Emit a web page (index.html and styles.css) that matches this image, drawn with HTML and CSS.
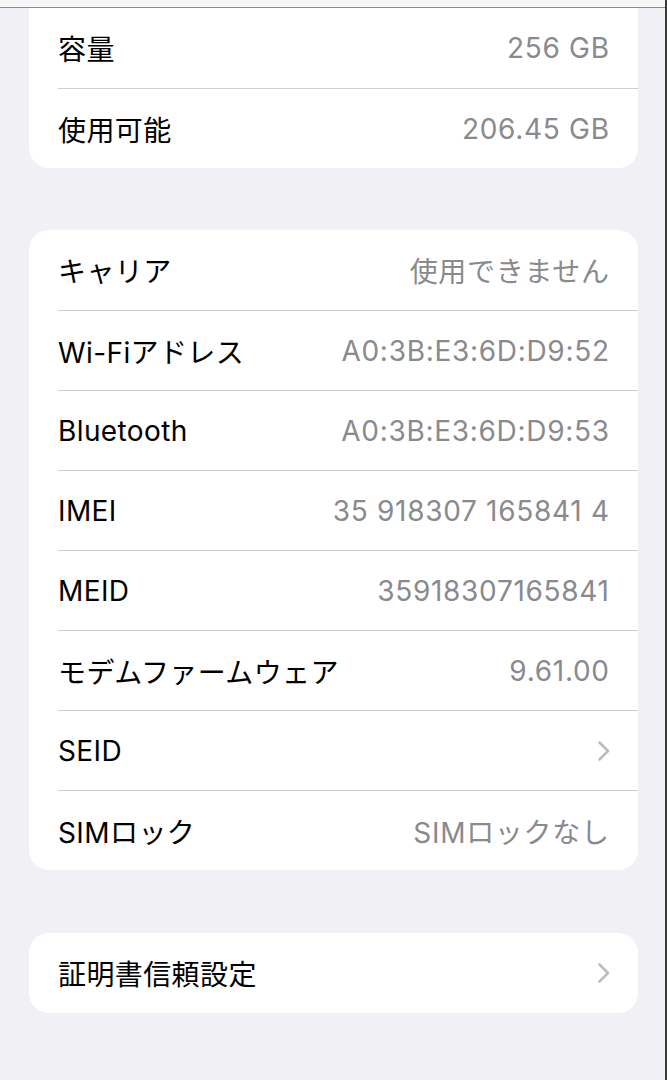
FILE: index.html
```html
<!DOCTYPE html>
<html lang="ja">
<head>
<meta charset="utf-8">
<title>情報</title>
<link rel="stylesheet" href="styles.css">
</head>
<body>
<div class="screen">
  <div class="topbar"></div>

  <div class="group group-first">
    <div class="row"><span class="label">容量</span><span class="value">256 GB</span></div>
    <div class="row"><span class="label">使用可能</span><span class="value">206.45 GB</span></div>
  </div>

  <div class="group">
    <div class="row"><span class="label">キャリア</span><span class="value">使用できません</span></div>
    <div class="row"><span class="label">Wi-Fiアドレス</span><span class="value">A0:3B:E3:6D:D9:52</span></div>
    <div class="row"><span class="label">Bluetooth</span><span class="value">A0:3B:E3:6D:D9:53</span></div>
    <div class="row"><span class="label">IMEI</span><span class="value">35 918307 165841 4</span></div>
    <div class="row"><span class="label">MEID</span><span class="value">35918307165841</span></div>
    <div class="row"><span class="label">モデムファームウェア</span><span class="value">9.61.00</span></div>
    <div class="row"><span class="label">SEID</span><span class="chev"><svg width="14" height="22" viewBox="0 0 14 22"><polyline points="2.5,2.5 11,11 2.5,19.5" fill="none" stroke="#bdbdc1" stroke-width="2.6" stroke-linecap="round" stroke-linejoin="round"/></svg></span></div>
    <div class="row"><span class="label">SIMロック</span><span class="value">SIMロックなし</span></div>
  </div>

  <div class="group">
    <div class="row"><span class="label">証明書信頼設定</span><span class="chev"><svg width="14" height="22" viewBox="0 0 14 22"><polyline points="2.5,2.5 11,11 2.5,19.5" fill="none" stroke="#bdbdc1" stroke-width="2.6" stroke-linecap="round" stroke-linejoin="round"/></svg></span></div>
  </div>
</div>
</body>
</html>
```

FILE: styles.css
```css
* { box-sizing: border-box; }

html, body {
  margin: 0;
  padding: 0;
  background: #f0f0f5;
}

body {
  font-family: "Inter", "Noto Sans CJK JP", sans-serif;
  font-size: 28px;
  color: #000;
}

.screen {
  width: 667px;
  height: 1080px;
  overflow: hidden;
  border-right: 2px solid #3a3a3a;
  display: flex;
  flex-direction: column;
}

.topbar {
  height: 8px;
  flex: none;
  background: #f7f7f7;
  border-bottom: 1px solid #8c8c8c;
}

.group {
  margin: 62px 27px 0 29px;
  background: #fff;
  border-radius: 20px;
  flex: none;
}

.group-first {
  margin-top: 0;
  border-radius: 0 0 20px 20px;
}

.group + .group + .group {
  margin-top: 63px;
}

.row {
  height: 80px;
  margin-left: 29px;
  padding-right: 29px;
  display: flex;
  align-items: center;
  justify-content: space-between;
}

.row + .row {
  border-top: 1px solid #cfcfd2;
}

.label {
  letter-spacing: 0.4px;
}

.value {
  color: #8a8a8e;
  letter-spacing: 0.7px;
  margin-right: -0.7px;
}

.chev {
  display: flex;
  align-items: center;
  margin-right: -2px;
}
```
